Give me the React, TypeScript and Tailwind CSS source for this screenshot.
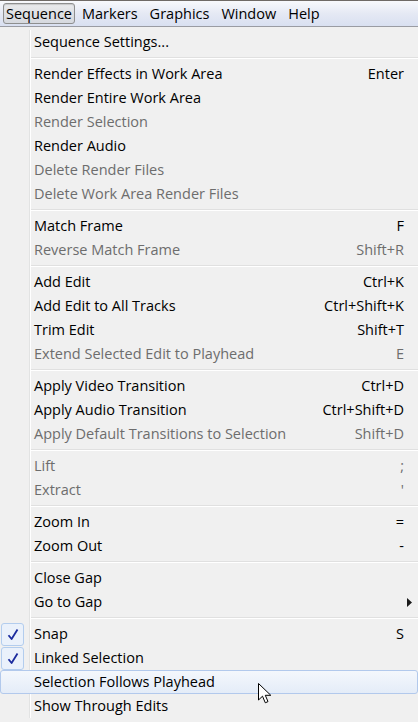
import React from 'react';

type Item =
  | { kind: 'sep' }
  | {
      kind: 'item';
      label: string;
      shortcut?: string;
      disabled?: boolean;
      checked?: boolean;
      hot?: boolean;
      submenu?: boolean;
    };

const sep: Item = { kind: 'sep' };
const it = (label: string, extra: Partial<Omit<Extract<Item, { kind: 'item' }>, 'kind' | 'label'>> = {}): Item => ({
  kind: 'item',
  label,
  ...extra,
});

const ITEMS: Item[] = [
  it('Sequence Settings...'),
  sep,
  it('Render Effects in Work Area', { shortcut: 'Enter' }),
  it('Render Entire Work Area'),
  it('Render Selection', { disabled: true }),
  it('Render Audio'),
  it('Delete Render Files', { disabled: true }),
  it('Delete Work Area Render Files', { disabled: true }),
  sep,
  it('Match Frame', { shortcut: 'F' }),
  it('Reverse Match Frame', { shortcut: 'Shift+R', disabled: true }),
  sep,
  it('Add Edit', { shortcut: 'Ctrl+K' }),
  it('Add Edit to All Tracks', { shortcut: 'Ctrl+Shift+K' }),
  it('Trim Edit', { shortcut: 'Shift+T' }),
  it('Extend Selected Edit to Playhead', { shortcut: 'E', disabled: true }),
  sep,
  it('Apply Video Transition', { shortcut: 'Ctrl+D' }),
  it('Apply Audio Transition', { shortcut: 'Ctrl+Shift+D' }),
  it('Apply Default Transitions to Selection', { shortcut: 'Shift+D', disabled: true }),
  sep,
  it('Lift', { shortcut: ';', disabled: true }),
  it('Extract', { shortcut: "'", disabled: true }),
  sep,
  it('Zoom In', { shortcut: '=' }),
  it('Zoom Out', { shortcut: '-' }),
  sep,
  it('Close Gap'),
  it('Go to Gap', { submenu: true }),
  sep,
  it('Snap', { shortcut: 'S', checked: true }),
  it('Linked Selection', { checked: true }),
  it('Selection Follows Playhead', { hot: true }),
  it('Show Through Edits'),
];

const MENUS = ['Sequence', 'Markers', 'Graphics', 'Window', 'Help'];

function CheckBox() {
  return (
    <div className="ml-[1px] w-[23px] h-[23px] rounded-[3px] border border-[#b3cdee] bg-[#eaf1fb] flex items-center justify-center">
      <svg width="12" height="13" viewBox="0 0 12 13" fill="none">
        <path d="M1.5 7.2 L4.6 11 L10.5 1.5" stroke="#1b2b9e" strokeWidth="1.8" strokeLinejoin="round" />
      </svg>
    </div>
  );
}

function Row({ item }: { item: Extract<Item, { kind: 'item' }> }) {
  const textColor = item.disabled ? 'text-[#6d6d6d]' : 'text-[#000000]';
  return (
    <div
      className={`h-[24px] flex items-center ${
        item.hot
          ? 'rounded-[3px] border border-[#b2c9ec] bg-gradient-to-b from-[#f4f7fc] to-[#e4ecf8]'
          : ''
      }`}>
      <div className={`${item.hot ? 'w-[28px]' : 'w-[29px]'} h-full flex items-center`}>
        {item.checked && <CheckBox />}
      </div>
      <div className={`h-full flex ${item.hot ? 'opacity-0' : ''}`}>
        <div className="w-px bg-[#e2e3e3]" />
        <div className="w-px bg-[#ffffff]" />
      </div>
      <span className={`pl-[3px] flex-1 ${textColor}`}>{item.label}</span>
      {item.shortcut && <span className={`pr-[14px] ${textColor}`}>{item.shortcut}</span>}
      {item.submenu && (
        <svg width="5" height="9" viewBox="0 0 5 9" className="mr-[6px]">
          <path d="M0 0 L5 4.5 L0 9 Z" fill="#1a1a1a" />
        </svg>
      )}
    </div>
  );
}

function Separator() {
  return (
    <div className="h-[8px] flex">
      <div className="w-[29px]" />
      <div className="w-px bg-[#e2e3e3]" />
      <div className="w-px bg-[#ffffff]" />
      <div className="flex-1 flex flex-col justify-center">
        <div className="h-px bg-[#e0e0e0]" />
        <div className="h-px bg-[#ffffff]" />
      </div>
    </div>
  );
}

export default function App() {
  return (
    <div className="relative w-[418px] h-[722px] overflow-hidden bg-[#f0f0f0] font-['Open_Sans',sans-serif] text-[14.5px] leading-none">
      {/* Menu bar */}
      <div className="h-[27px] border-t border-[#6f6a66] border-b border-b-[#9a9ca3] bg-gradient-to-b from-[#f8f9fc] via-[#e5e9f4] to-[#d9e0f1] flex items-center pl-[3px]">
        {MENUS.map((m, i) => (
          <div
            key={m}
            className={`h-[21px] flex items-center pt-[2px] text-[#000] ${
              i === 0
                ? 'rounded-[3px] border border-[#8e8f8f] bg-gradient-to-b from-[#e9eaec] to-[#d6d9df] px-[2px] mr-[1px] shadow-[inset_0_1px_1px_rgba(0,0,0,0.15)]'
                : 'px-[6px]'
            }`}>
            {m}
          </div>
        ))}
      </div>

      {/* Dropdown body */}
      <div className="pt-[3px] flex flex-col">
        {ITEMS.map((item, i) =>
          item.kind === 'sep' ? <Separator key={i} /> : <Row key={i} item={item} />
        )}
      </div>

      {/* Mouse pointer */}
      <svg
        className="absolute left-[258px] top-[683px]"
        width="16"
        height="24"
        viewBox="0 0 16 24">
        <path
          d="M0.5 0.5 L0.5 17 L4.5 13.2 L7.3 19.8 L10 18.6 L7.3 12.3 L12.8 12.3 Z"
          fill="#ffffff"
          stroke="#000000"
          strokeWidth="1"
          strokeLinejoin="miter"
        />
      </svg>
    </div>
  );
}
